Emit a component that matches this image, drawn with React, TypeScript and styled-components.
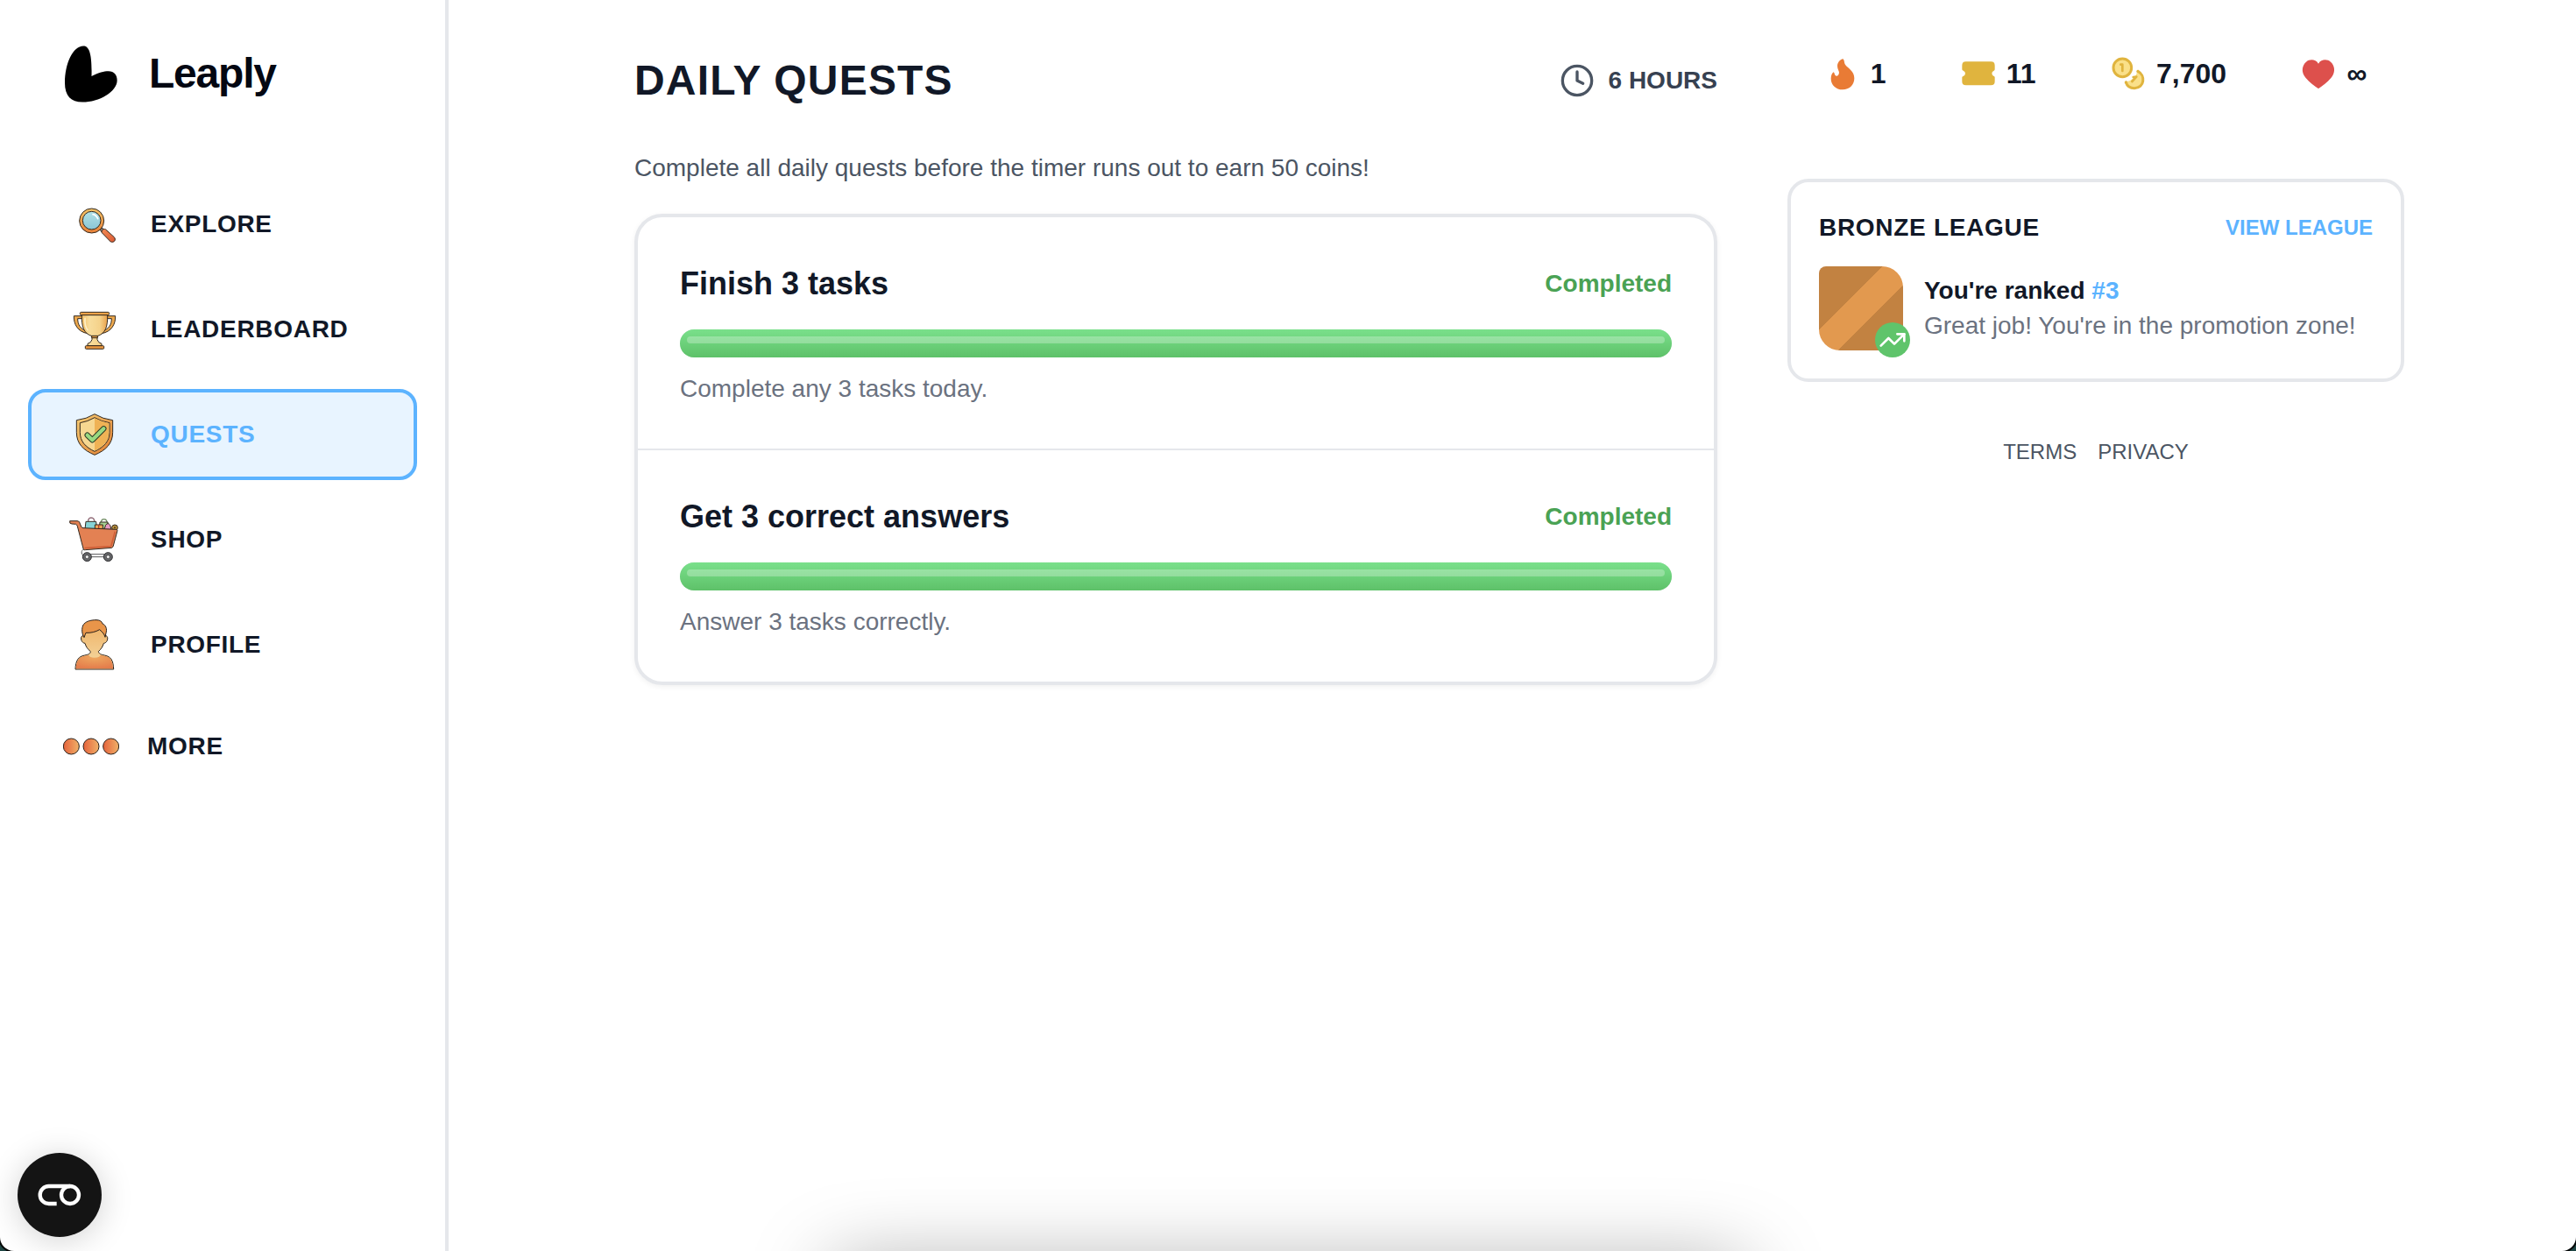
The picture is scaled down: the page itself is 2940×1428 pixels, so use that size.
import React from "react";
import styled, { createGlobalStyle, css } from "styled-components";
import { Clock, TrendingUp } from "lucide-react";

const ink = "#111827";
const line = "#e5e7eb";
const blue = "#5cb3ff";

const GlobalStyle = createGlobalStyle`
  *, *::before, *::after { box-sizing: border-box; }
  html { background: #1f4644; }
  body { margin: 0; }
  body, button { font-family: "Liberation Sans", Arial, Helvetica, sans-serif; }
  h1, h2, h3, p, ul { margin: 0; padding: 0; }
  a { color: inherit; text-decoration: none; }
`;

const Page = styled.div`
  display: flex;
  min-height: 100vh;
  background: #fff;
  color: ${ink};
  border-radius: 0 0 16px 16px;
  box-shadow: 0 0 0 2px #050808;
  overflow: hidden;
`;

const Sidebar = styled.aside`
  flex: none;
  width: 512px;
  padding: 48px 32px;
  border-right: 4px solid ${line};
`;

const Brand = styled.a`
  display: flex;
  align-items: center;
  gap: 36px;
  height: 72px;
  padding-left: 42px;
  margin-bottom: 84px;
  color: #030712;
  font-size: 48px;
  line-height: 56px;
  font-weight: 700;
  letter-spacing: -0.025em;
`;

const NavList = styled.ul`
  display: flex;
  flex-direction: column;
  gap: 16px;
  list-style: none;
`;

const navRow = css`
  display: flex;
  align-items: center;
  gap: 32px;
  width: 100%;
  padding: 16px 40px;
  border-radius: 20px;
  font-size: 28px;
  line-height: 40px;
  font-weight: 700;
  letter-spacing: 0.025em;
`;

const NavLink = styled.a<{ $active?: boolean }>`
  ${navRow}
  border: 4px solid ${(p) => (p.$active ? blue : "transparent")};
  background: ${(p) => (p.$active ? "#e8f4ff" : "transparent")};
  color: ${(p) => (p.$active ? blue : ink)};
`;

const MoreButton = styled.button`
  ${navRow}
  border: 0;
  background: none;
  color: ${ink};
  cursor: pointer;
`;

const NavSvg = styled.svg`
  flex: none;
  width: 64px;
  height: 64px;
`;

const Content = styled.div`
  flex: 1;
  display: flex;
  align-items: flex-start;
  gap: 80px;
  min-width: 0;
  padding: 60px 196px 64px 212px;
`;

const Main = styled.main`
  flex: 1;
  min-width: 0;
`;

const TitleBar = styled.header`
  display: flex;
  align-items: center;
  justify-content: space-between;
  margin-bottom: 48px;
`;

const Title = styled.h1`
  font-size: 48px;
  line-height: 64px;
  font-weight: 700;
  letter-spacing: 0.025em;
`;

const Timer = styled.div`
  display: flex;
  align-items: center;
  gap: 16px;
  color: #374151;
  font-size: 28px;
  line-height: 40px;
  font-weight: 700;

  svg {
    color: #4b5563;
  }
`;

const Intro = styled.p`
  margin-bottom: 32px;
  color: #4b5563;
  font-size: 28px;
  line-height: 40px;
`;

const QuestCard = styled.section`
  border: 4px solid ${line};
  border-radius: 32px;
  box-shadow: 0 2px 6px rgba(0, 0, 0, 0.06);
`;

const Quest = styled.article`
  padding: 48px;

  & + & {
    border-top: 2px solid ${line};
  }
`;

const QuestHead = styled.div`
  display: flex;
  align-items: center;
  justify-content: space-between;
  margin-bottom: 24px;
`;

const QuestTitle = styled.h2`
  font-size: 36px;
  line-height: 56px;
  font-weight: 700;
`;

const Status = styled.span`
  color: #4aa254;
  font-size: 28px;
  line-height: 40px;
  font-weight: 700;
`;

const Track = styled.div`
  height: 32px;
  margin-bottom: 16px;
  border-radius: 16px;
  background: ${line};
`;

const Fill = styled.div`
  height: 100%;
  padding: 8px;
  border-radius: 16px;
  background: linear-gradient(180deg, #7ae08b, #5ec169);

  &::before {
    content: "";
    display: block;
    height: 8px;
    border-radius: 4px;
    background: rgba(255, 255, 255, 0.27);
  }
`;

const Muted = styled.p`
  color: #6b7280;
  font-size: 28px;
  line-height: 40px;
`;

const Side = styled.aside`
  flex: none;
  width: 704px;
  padding-top: 4px;
`;

const Stats = styled.ul`
  display: flex;
  justify-content: space-around;
  margin-bottom: 100px;
  list-style: none;
`;

const Stat = styled.li`
  display: flex;
  align-items: center;
  gap: 12px;
  font-size: 32px;
  line-height: 40px;
  font-weight: 700;

  svg {
    flex: none;
    width: 40px;
    height: 40px;
  }
`;

const LeagueCard = styled.section`
  padding: 32px;
  border: 4px solid ${line};
  border-radius: 24px;
`;

const LeagueHead = styled.div`
  display: flex;
  align-items: center;
  justify-content: space-between;
  margin-bottom: 24px;
`;

const LeagueTitle = styled.h2`
  font-size: 28px;
  line-height: 40px;
  font-weight: 700;
  letter-spacing: 0.025em;
`;

const LeagueLink = styled.a`
  && {
    color: ${blue};
  }
  font-size: 24px;
  line-height: 32px;
  font-weight: 700;
`;

const LeagueRow = styled.div`
  display: flex;
  align-items: center;
  gap: 24px;
`;

const Medal = styled.div`
  position: relative;
  flex: none;
  width: 96px;
  height: 96px;
  border-radius: 8px 24px;
  background: linear-gradient(135deg, #c28241 38%, #e2994f 38%, #e2994f 61%, #c28241 61%);
`;

const Badge = styled.span`
  position: absolute;
  right: -8px;
  bottom: -8px;
  display: flex;
  align-items: center;
  justify-content: center;
  width: 40px;
  height: 40px;
  border-radius: 50%;
  background: #5fc46b;
  color: #fff;
`;

const Rank = styled.p`
  font-size: 28px;
  line-height: 40px;
  font-weight: 700;

  em {
    color: ${blue};
    font-style: normal;
  }
`;

const Footer = styled.footer`
  display: flex;
  justify-content: center;
  gap: 24px;
  padding-top: 64px;
  color: #4b5563;
  font-size: 24px;
  line-height: 32px;
`;

const CookieButton = styled.button`
  position: fixed;
  left: 20px;
  bottom: 16px;
  display: flex;
  align-items: center;
  justify-content: center;
  width: 96px;
  height: 96px;
  padding: 0;
  border: 0;
  border-radius: 50%;
  background: #141414;
  box-shadow: 0 4px 36px rgba(0, 0, 0, 0.18);
  cursor: pointer;
`;

const BottomShade = styled.div`
  position: fixed;
  left: 50%;
  bottom: -80px;
  width: 1040px;
  height: 60px;
  transform: translateX(-50%);
  border-radius: 20px;
  box-shadow: 0 0 90px 4px rgba(0, 0, 0, 0.36);
  pointer-events: none;
`;

const outline = { stroke: "#33291f", strokeWidth: 3, strokeLinejoin: "round" as const };

const LogoMark = () => (
  <svg width="60" height="65" viewBox="222 154 181 195" aria-hidden="true">
    <path d="M286 155C306 155 316 182 314 259C340 247 356 242 372 242C392 242 402 256 402 273C402 312 340 348 283 348C243 348 222 326 222 282C222 215 250 155 286 155Z" />
  </svg>
);

const ExploreIcon = () => (
  <NavSvg viewBox="228 672 192 192" aria-hidden="true">
    <defs>
      <linearGradient id="ring" x1="0" y1="0" x2="0" y2="1"><stop offset="0" stopColor="#f5c467" /><stop offset="1" stopColor="#e88038" /></linearGradient>
      <linearGradient id="lens" x1="0" y1="0" x2="0" y2="1"><stop offset="0" stopColor="#b3e2e6" /><stop offset="1" stopColor="#8ac6d6" /></linearGradient>
      <linearGradient id="grip" x1="0" y1="0" x2="1" y2="1"><stop offset="0" stopColor="#f08a55" /><stop offset="1" stopColor="#dd5a34" /></linearGradient>
    </defs>
    <path d="M342 786L350 780L358 790L350 797Z" fill="#8a8580" {...outline} />
    <path d="M349 797C346 790 353 782 361 785L391 812C399 822 390 832 379 828Z" fill="url(#grip)" {...outline} />
    <circle cx="314" cy="756" r="42" fill="url(#ring)" {...outline} />
    <circle cx="314" cy="755" r="31" fill="url(#lens)" {...outline} />
    <path d="M318 734Q329 736 335 749" fill="none" stroke="#fff" strokeWidth="5" strokeLinecap="round" />
  </NavSvg>
);

const TrophyIcon = () => (
  <NavSvg viewBox="228 72 192 192" aria-hidden="true">
    <defs>
      <linearGradient id="cup" x1="0" y1="0" x2="1" y2="0"><stop offset="0" stopColor="#f2bf68" /><stop offset=".3" stopColor="#f8dd9c" /><stop offset=".7" stopColor="#f5d28a" /><stop offset="1" stopColor="#e9a04a" /></linearGradient>
    </defs>
    <path fillRule="evenodd" d="M282 122H253C252 150 266 176 300 182L296 172C276 168 266 152 266 131H283ZM366 122H395C396 150 382 176 348 182L352 172C372 168 382 152 382 131H365Z" fill="#eda84d" {...outline} />
    <path d="M280 118H368C369 158 362 182 333 191V203Q336 214 348 217V224H300V217Q312 214 315 203V191C286 182 279 158 280 118Z" fill="url(#cup)" {...outline} />
    <rect x="274" y="109" width="100" height="10" rx="4" fill="#eda348" {...outline} />
    <rect x="314" y="190" width="20" height="7" fill="#e29a42" {...outline} />
    <rect x="292" y="224" width="64" height="11" rx="3" fill="#e8963f" {...outline} />
    <path d="M291 130Q289 156 300 170" fill="none" stroke="#fdf0c8" strokeWidth="5" strokeLinecap="round" />
  </NavSvg>
);

const ShieldIcon = () => (
  <NavSvg viewBox="228 432 192 192" aria-hidden="true">
    <defs>
      <linearGradient id="rim" x1="0" y1="0" x2="1" y2="1"><stop offset="0" stopColor="#f7ce76" /><stop offset="1" stopColor="#df7c30" /></linearGradient>
    </defs>
    <path d="M324 458Q352 475 386 479V520C386 560 362 582 324 598C286 582 262 560 262 520V479Q296 475 324 458Z" fill="url(#rim)" {...outline} />
    <path d="M324 470Q348 484 375 488V520C375 552 355 571 324 586C293 571 274 552 274 520V488Q300 484 324 470Z" fill="#f6d791" {...outline} />
    <path d="M324 472Q348 485 373 489V520C373 551 354 569 324 584Z" fill="#efb255" />
    <path d="M299 530L316 547L355 508" fill="none" stroke="#2c3a26" strokeWidth="19" strokeLinecap="round" strokeLinejoin="round" />
    <path d="M299 530L316 547L355 508" fill="none" stroke="#98d982" strokeWidth="13" strokeLinecap="round" strokeLinejoin="round" />
  </NavSvg>
);

const CartIcon = () => (
  <NavSvg viewBox="228 792 192 192" aria-hidden="true">
    <path d="M302 830V822Q304 813 312 813Q321 813 323 822V830" fill="none" stroke="#94707c" strokeWidth="4" />
    <path d="M294 826H329L332 852H291Z" fill="#86d3d6" {...outline} />
    <path d="M346 832Q346 818 356 818Q366 818 367 832" fill="none" stroke="#6d8a60" strokeWidth="4" />
    <path d="M342 828H369L372 850H340Z" fill="#a5cf90" {...outline} />
    <rect x="325" y="837" width="27" height="15" fill="#eda557" {...outline} />
    <path d="M338 837V852" stroke="#b33f2b" strokeWidth="4" />
    <path d="M362 838Q369 828 377 838L381 853H357Z" fill="#e79ac5" {...outline} />
    <circle cx="393" cy="847" r="10" fill="#b9903c" {...outline} />
    <circle cx="393" cy="847" r="3" fill="#4b3a18" />
    <path d="M239 824Q237 834 246 834L260 835Q263 836 265 842L286 922Q288 924 292 923L383 916Q387 914 388 909L402 857Q402 853 397 853L285 848Q280 848 278 843L272 828Q270 824 264 824Z" fill="#e38153" {...outline} />
    <path d="M290 917L380 911L394 860" fill="none" stroke="#cf5f38" strokeWidth="5" />
    <path d="M288 921C276 923 277 942 290 944M300 938H370M300 947H370" fill="none" stroke="#57575a" strokeWidth="3" />
    {[298, 370].map((x) => (
      <g key={x}>
        <circle cx={x} cy="947" r="15" fill="#66676a" stroke="#2d2d2f" strokeWidth="3" />
        <circle cx={x} cy="947" r="6" fill="#f1f1f1" stroke="#2d2d2f" strokeWidth="2" />
      </g>
    ))}
  </NavSvg>
);

const ProfileIcon = () => (
  <NavSvg viewBox="228 312 192 192" aria-hidden="true">
    <defs>
      <linearGradient id="skin" x1="0" y1="0" x2="0" y2="1"><stop offset="0" stopColor="#efb56b" /><stop offset="1" stopColor="#f4dba6" /></linearGradient>
      <radialGradient id="shirt" cx=".5" cy=".2" r=".8"><stop offset="0" stopColor="#eea75f" /><stop offset="1" stopColor="#e47c4b" /></radialGradient>
    </defs>
    <path d="M258 492C259 462 268 448 290 444C302 442 310 438 310 431C300 423 294 414 291 403C280 402 275 388 279 380L288 374V350H360V374L367 380C371 388 366 402 355 403C352 414 346 423 337 431C338 438 346 442 358 444C380 448 388 462 389 492Z" fill="url(#skin)" stroke="#2a211a" strokeWidth="3" strokeLinejoin="round" />
    <path d="M260 490C261 464 270 449 290 446L304 443Q306 452 323 452Q342 452 344 443L358 446C378 449 386 464 387 490Z" fill="url(#shirt)" />
    <path d="M288 383C279 368 280 352 284 342C291 328 310 323 330 323C342 323 349 328 351 336C363 341 367 354 363 368L360 382C357 371 352 366 341 356C328 364 310 368 294 367Q291 374 288 383Z" fill="#e8954a" stroke="#2a211a" strokeWidth="3" strokeLinejoin="round" />
  </NavSvg>
);

const MoreIcon = () => (
  <NavSvg viewBox="216 660 192 192" aria-hidden="true">
    <defs>
      <linearGradient id="dot" x1="0" y1="0" x2="1" y2="0"><stop offset="0" stopColor="#e5623c" /><stop offset="1" stopColor="#f0b268" /></linearGradient>
    </defs>
    {[244, 312, 380].map((x) => (
      <circle key={x} cx={x} cy="756" r="27" fill="url(#dot)" stroke="#2a211a" strokeWidth="3" />
    ))}
  </NavSvg>
);

const FlameIcon = () => (
  <svg viewBox="9 27 120 120" aria-hidden="true">
    <path d="M70 37C76 40 73 50 79 58C88 70 109 78 109 103C109 126 92 142 69 142C46 142 29 126 29 104C29 95 32 86 38 82C42 84 41 95 48 95C54 96 56 89 57 84C57 78 51 72 51 61C51 49 60 39 70 37Z" fill="#e97b35" />
  </svg>
);

const TicketIcon = () => (
  <svg viewBox="474 27 120 120" aria-hidden="true">
    <path d="M491 46H577Q590 46 590 59V73Q590 76 587 77A10 10 0 0 0 587 96Q590 97 590 100V114Q590 127 577 127H491Q478 127 478 114V100Q478 97 482 96A10 10 0 0 0 482 77Q478 76 478 73V59Q478 46 491 46Z" fill="#e0b43e" />
  </svg>
);

const CoinsIcon = () => (
  <svg viewBox="987 27 120 120" fill="none" strokeLinecap="round" strokeLinejoin="round" aria-hidden="true">
    <path d="M1080 78A31 31 0 0 1 1038 116Q1072 112 1080 78Z" fill="#fae089" />
    <path d="M1080 79A31 31 0 0 1 1039 117" stroke="#e0b43e" strokeWidth="9" />
    <path d="M1080 79C1106 92 1104 136 1068 137C1052 137 1043 130 1039 117Q1070 108 1080 79Z" fill="#fae089" />
    <path d="M1080 79C1106 92 1104 136 1068 137C1052 137 1043 130 1039 117" stroke="#e0b43e" strokeWidth="9" />
    <path d="M1064 99L1075 98L1060 114" stroke="#e0b43e" strokeWidth="8" />
    <circle cx="1027" cy="67" r="31" fill="#fae089" stroke="#e0b43e" strokeWidth="9" />
    <path d="M1021 56H1027V78" stroke="#e0b43e" strokeWidth="8" />
  </svg>
);

const HeartIcon = () => (
  <svg viewBox="0 0 120 120" aria-hidden="true">
    <path d="M60 26C50 10 30 10 18 20C4 32 2 52 12 68C22 84 42 98 56 109Q60 113 64 109C78 98 98 84 108 68C118 52 116 32 102 20C90 10 70 10 60 26Z" fill="#dd504c" />
  </svg>
);

const ToggleIcon = () => (
  <svg width="50" height="26" viewBox="130 213 150 78" fill="none" stroke="#fff" strokeWidth="13" aria-hidden="true">
    <path d="M195 282H168A30 30 0 0 1 168 222H241" />
    <circle cx="241" cy="252" r="30" />
  </svg>
);

const navItems = [
  { label: "EXPLORE", Icon: ExploreIcon },
  { label: "LEADERBOARD", Icon: TrophyIcon },
  { label: "QUESTS", Icon: ShieldIcon, active: true },
  { label: "SHOP", Icon: CartIcon },
  { label: "PROFILE", Icon: ProfileIcon },
];

const stats = [
  { name: "Streak", value: "1", Icon: FlameIcon },
  { name: "Tickets", value: "11", Icon: TicketIcon },
  { name: "Coins", value: "7,700", Icon: CoinsIcon },
  { name: "Hearts", value: "∞", Icon: HeartIcon },
];

const quests = [
  { title: "Finish 3 tasks", note: "Complete any 3 tasks today.", done: 3, total: 3 },
  { title: "Get 3 correct answers", note: "Answer 3 tasks correctly.", done: 3, total: 3 },
];

export default function App() {
  return (
    <>
      <GlobalStyle />
      <Page>
        <Sidebar>
          <Brand href="#home">
            <LogoMark />
            Leaply
          </Brand>
          <nav>
            <NavList>
              {navItems.map(({ label, Icon, active }) => (
                <li key={label}>
                  <NavLink href={`#${label.toLowerCase()}`} $active={active} aria-current={active ? "page" : undefined}>
                    <Icon />
                    {label}
                  </NavLink>
                </li>
              ))}
              <li>
                <MoreButton type="button">
                  <MoreIcon />
                  MORE
                </MoreButton>
              </li>
            </NavList>
          </nav>
        </Sidebar>

        <Content>
          <Main>
            <TitleBar>
              <Title>DAILY QUESTS</Title>
              <Timer>
                <Clock size={40} aria-hidden="true" />
                6 HOURS
              </Timer>
            </TitleBar>
            <Intro>Complete all daily quests before the timer runs out to earn 50 coins!</Intro>
            <QuestCard>
              {quests.map((quest) => (
                <Quest key={quest.title}>
                  <QuestHead>
                    <QuestTitle>{quest.title}</QuestTitle>
                    <Status>Completed</Status>
                  </QuestHead>
                  <Track
                    role="progressbar"
                    aria-label={quest.title}
                    aria-valuenow={quest.done}
                    aria-valuemin={0}
                    aria-valuemax={quest.total}
                  >
                    <Fill style={{ width: `${(quest.done / quest.total) * 100}%` }} />
                  </Track>
                  <Muted>{quest.note}</Muted>
                </Quest>
              ))}
            </QuestCard>
          </Main>

          <Side>
            <Stats>
              {stats.map(({ name, value, Icon }) => (
                <Stat key={name} title={name}>
                  <Icon />
                  {value}
                </Stat>
              ))}
            </Stats>
            <LeagueCard>
              <LeagueHead>
                <LeagueTitle>BRONZE LEAGUE</LeagueTitle>
                <LeagueLink href="#leaderboard">VIEW LEAGUE</LeagueLink>
              </LeagueHead>
              <LeagueRow>
                <Medal>
                  <Badge>
                    <TrendingUp size={32} aria-hidden="true" />
                  </Badge>
                </Medal>
                <div>
                  <Rank>
                    You're ranked <em>#3</em>
                  </Rank>
                  <Muted>Great job! You're in the promotion zone!</Muted>
                </div>
              </LeagueRow>
            </LeagueCard>
            <Footer>
              <a href="#terms">TERMS</a>
              <a href="#privacy">PRIVACY</a>
            </Footer>
          </Side>
        </Content>
      </Page>
      <BottomShade />
      <CookieButton type="button" aria-label="Cookie settings">
        <ToggleIcon />
      </CookieButton>
    </>
  );
}
